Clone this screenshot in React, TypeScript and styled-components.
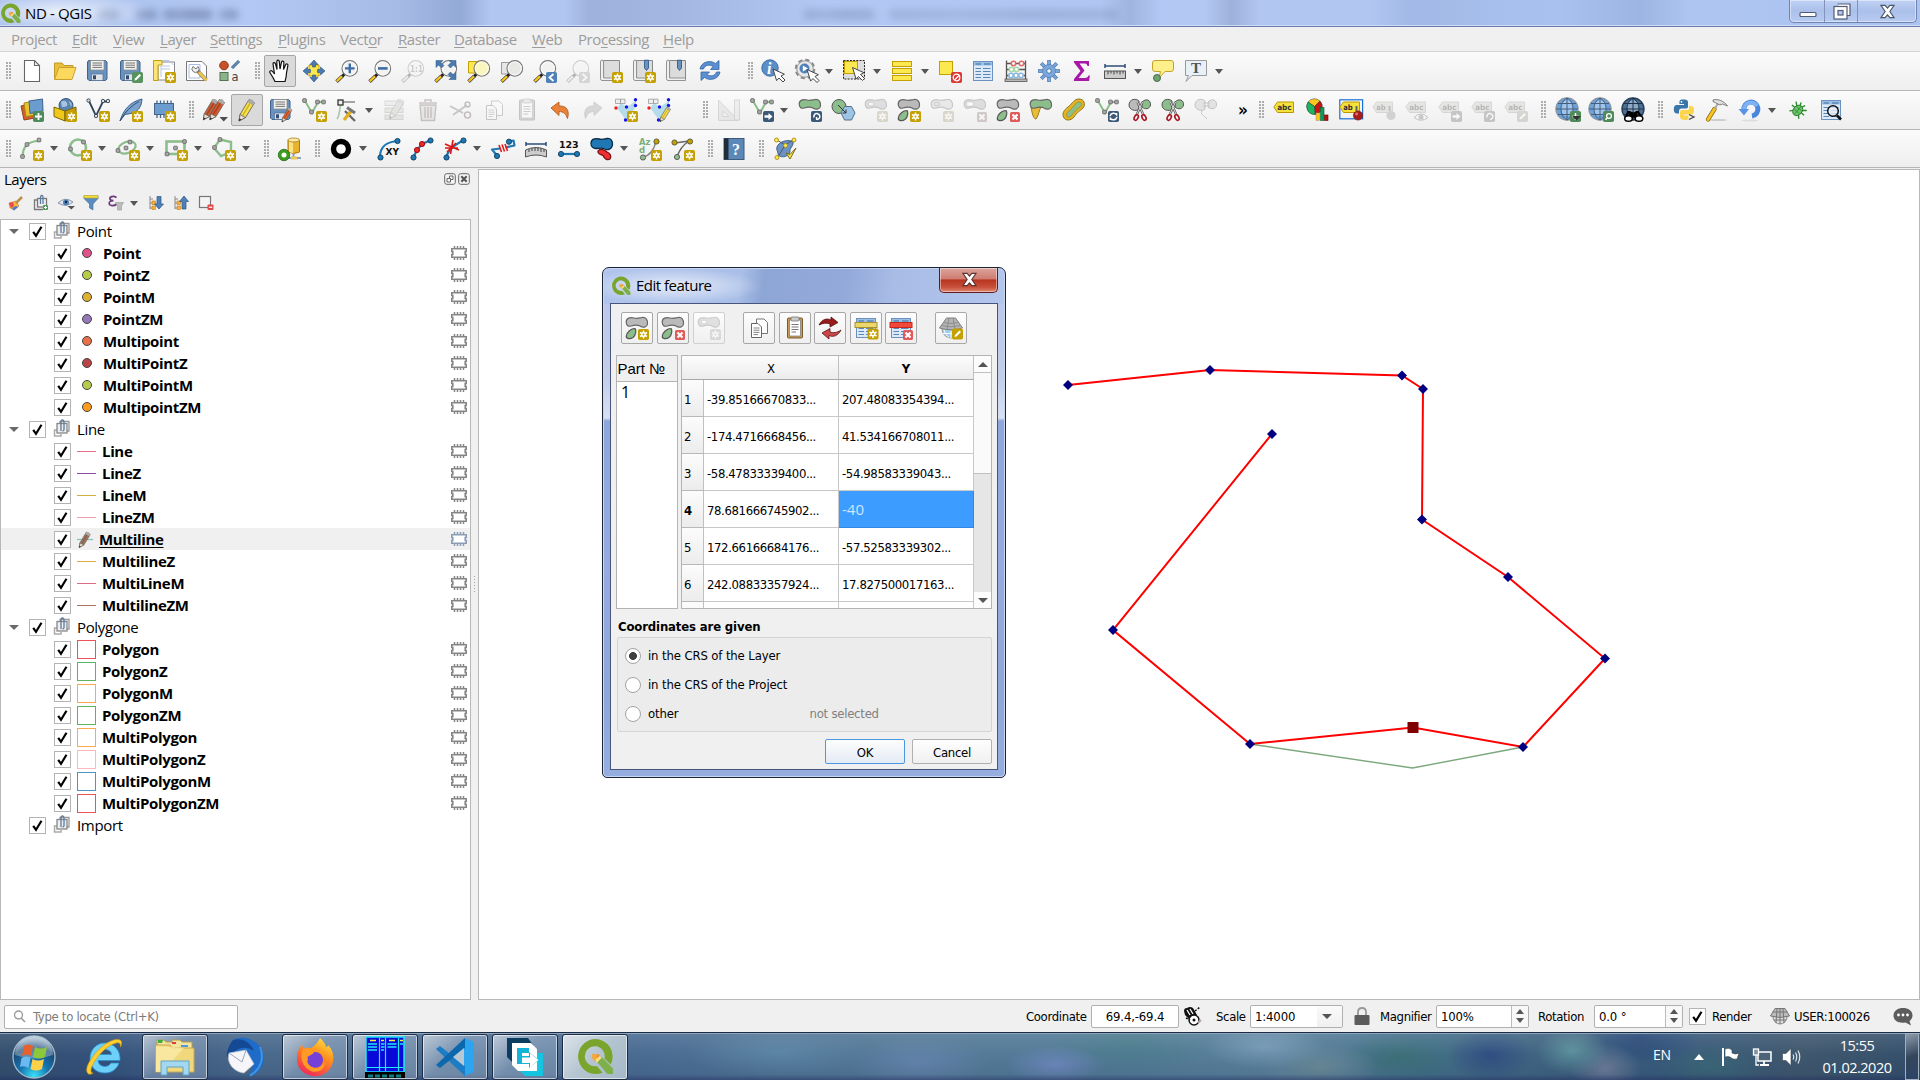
import React from 'react';
import styled, { createGlobalStyle, css } from 'styled-components';

const ui = '"Open Sans", "Noto Sans", sans-serif';
const tahoma = '"DejaVu Sans Condensed", "DejaVu Sans", sans-serif';

const Global = createGlobalStyle`
  * { box-sizing: border-box; }
  html, body { margin: 0; padding: 0; overflow: hidden; }
  body { width: 1920px; height: 1080px; background: #f0f0f0; color: #000; }
`;

/* ------------------------------------------------------------------ */
/* Icon fragments                                                      */
/* ------------------------------------------------------------------ */

const Star = ({ x = 13, y = 13 }: { x?: number; y?: number }) => (
  <g transform={`translate(${x} ${y})`}>
    <rect width="11" height="11" rx="1.8" fill="#c4a000" />
    <path d="M5.5 1.5V9.5M2 3.5L9 7.5M9 3.5L2 7.5" stroke="#fff" strokeWidth="1.5" />
    <circle cx="5.5" cy="5.5" r="2.5" fill="#fff" />
    <circle cx="5.5" cy="5.5" r="1" fill="#c4a000" />
  </g>
);
const Remove = () => (
  <g transform="translate(14 14)">
    <rect width="10" height="10" rx="1.6" fill="#e05a5a" />
    <path d="M2.5 2.5L7.5 7.5M7.5 2.5L2.5 7.5" stroke="#fff" strokeWidth="2.2" />
  </g>
);
const Badge = ({ fill, children, x = 13, y = 13 }: any) => (
  <g transform={`translate(${x} ${y})`}>
    <rect width="11" height="11" rx="1.8" fill={fill} />
    {children}
  </g>
);
const PencilMark = () => <path d="M2.5 8.5L3 6.5 7.5 2 9 3.5 4.5 8Z" fill="#fff" />;
const Disk = ({ x = 1, y = 1 }: any) => (
  <g transform={`translate(${x} ${y})`}>
    <path d="M1.5 0.5H18.5L20 2V19L18.5 20.5H2L0.5 19V2Z" fill="#6b92bd" stroke="#41638c" />
    <rect x="3.5" y="0.5" width="13.5" height="9.5" fill="#f0f0ee" stroke="#888a85" strokeWidth=".7" />
    <path d="M5.5 3H15M5.5 5.2H15M5.5 7.4H15" stroke="#555" strokeWidth=".8" />
    <rect x="4.5" y="14" width="11.5" height="6.5" fill="#dfe3e8" stroke="#41638c" strokeWidth=".6" />
    <rect x="6" y="15.3" width="3" height="4" fill="#2f4d78" />
  </g>
);
const Lens = ({ fill = '#f2f2f0', handle = '#fcc51a', children }: any) => (
  <g>
    <path d="M9.5 15L6.5 18" stroke="#222" strokeWidth="3" />
    <path d="M7.5 17L1.5 22.6" stroke="#444" strokeWidth="3.6" />
    <path d="M7 17.4L1.8 22.2" stroke={handle} strokeWidth="2.2" />
    <circle cx="14.8" cy="9.4" r="7.8" fill={fill} stroke="#777" strokeWidth="1.1" />
    <circle cx="14.8" cy="9.4" r="6.5" fill="none" stroke="#fff" strokeWidth=".8" />
    {children}
  </g>
);
const blobD = 'M1.2 6C1.2 2 5 1 9 2 12 2.8 14 2 17 1.5 21 1 23 4 22.5 8 22 11.5 18 12 15 10 12 8.2 9 9 6 10 3 11 1.2 9 1.2 6Z';
const Blob = ({ fill = '#8cbe8c' }: any) => <path d={blobD} fill={fill} stroke="#666" strokeWidth="1.2" />;
const Leaf = ({ fill = '#8cbe8c' }: any) => (
  <path d="M1.3 20C2 16 6 12.5 10 12.5 11.5 14 11 19 8 21.5 5 23.5 1 23 1.3 20Z" fill={fill} stroke="#555" strokeWidth="1.2" />
);
const Nodes = ({ pts, fill = '#aaa', r = 1.8 }: { pts: number[][]; fill?: string; r?: number }) => (
  <>
    {pts.map(([x, y]) => (
      <rect key={`${x}-${y}`} x={x - r} y={y - r} width={r * 2} height={r * 2} rx=".6" fill={fill} stroke="#666" strokeWidth=".9" />
    ))}
  </>
);
const Dots = ({ pts, fill, r = 2.6, stroke = '#0b3c5d' }: any) => (
  <>
    {pts.map(([x, y]: number[]) => (
      <circle key={`${x}-${y}`} cx={x} cy={y} r={r} fill={fill} stroke={stroke} strokeWidth=".9" />
    ))}
  </>
);
const Vee = ({ c = '#8cbe8c' }: any) => (
  <>
    <path d="M3 3L10 15 16 4H22" fill="none" stroke={c} strokeWidth="2" />
    <Nodes pts={[[2.5, 2.5], [9.5, 14], [15.5, 4], [21.5, 4]]} />
  </>
);
const Cursor = ({ x = 11, y = 9 }: any) => (
  <path transform={`translate(${x} ${y})`} d="M1 1L4.6 12.6 7 10 11 14 13 12 9 8 12.4 6.2Z" fill="#fff" stroke="#444" strokeWidth="1" />
);
const Pencil = ({ c = '#e6562b', d = '#a8381a', x = 0, y = 0, s = 1 }: any) => (
  <g transform={`translate(${x} ${y}) scale(${s})`}>
    <path d="M3 23L4 16.5 13 1.5 18.5 4.8 9.5 19.5Z" fill={c} stroke="#555" strokeWidth=".8" />
    <path d="M6.5 17.7L15.5 3" stroke={d} strokeWidth="1.2" />
    <path d="M3 23L4 16.5 9.5 19.5Z" fill="#e8ddc8" stroke="#555" strokeWidth=".7" />
    <path d="M3 23L3.4 20.5 5.4 21.5Z" fill="#222" />
    <path d="M11.5 4L13 1.5Q16.5 0 18.5 4.8L17 7.2Z" fill="#aaa" />
  </g>
);
const Paper = () => <path d="M4.5 1.5H14.5L19.5 6.5V22.5H4.5Z M14.5 1.5V6.5H19.5" fill="#fff" stroke="#666" strokeWidth="1.1" />;
const Bookmark = () => (
  <>
    <path d="M4.5 1.5H20.5V20.5H4.5Z" fill="#dcdcdc" stroke="#888" />
    <path d="M1.5 3Q1.5 1 3 1T4.6 3V19H20.5V21.5H3Q1.5 21.5 1.5 19.5Z" fill="#f0f0f0" stroke="#888" strokeWidth=".9" />
  </>
);
const Ribbon = () => <path d="M12.5 1.2H16.5V9L14.5 11.5 12.5 9Z" fill="#6b92bd" stroke="#2f5a8c" strokeWidth=".9" />;
const TableGlyph = ({ x = 2, y = 2 }: any) => (
  <g transform={`translate(${x} ${y})`}>
    <rect x=".5" y=".5" width="19" height="19" fill="#dceaf8" stroke="#6b92bd" />
    <rect x="1" y="1" width="18" height="3.5" fill="#9cc0e4" />
    <path d="M2.5 3H8M11 3H17.5" stroke="#5a86b8" strokeWidth="1.4" />
    <path d="M2.5 7.5H8M10 7.5H17.5M2.5 10.5H8M10 10.5H17.5M2.5 13.5H8M10 13.5H17.5M2.5 16.5H8M10 16.5H17.5" stroke="#5a86b8" strokeWidth="1" />
  </g>
);
const Globe = ({ dark }: any) => (
  <>
    <circle cx="12" cy="11" r="11" fill={dark ? '#4d7196' : '#6ba2dc'} stroke={dark ? '#2a4058' : '#8a98a8'} strokeWidth="1.4" />
    <ellipse cx="12" cy="10" rx="6" ry="8" fill={dark ? '#a8c2dc' : '#b8d6f4'} opacity=".7" />
    <path d="M12 0V22M1 11H23M3 5.5H21M3 16.5H21M12 0C4 4 4 18 12 22M12 0C20 4 20 18 12 22" fill="none" stroke={dark ? '#1d3248' : '#475d78'} strokeWidth="1" />
  </>
);
const Tag = ({ fill = '#f6e03a', text = 'abc', y = 4, stroke = '#b89a00' }: any) => (
  <>
    <path d={`M0.8 ${y + 5}L4.5 ${y}H20.5V${y + 10.5}H4.5Z`} fill={fill} stroke={stroke} strokeWidth="1" />
    <text x="4.2" y={y + 7.9} fontFamily="DejaVu Sans" fontWeight="bold" fontSize="7.6" fill="#333" textLength={text === 'abc' ? 14.5 : 9.5} lengthAdjust="spacingAndGlyphs">{text}</text>
  </>
);
const Scissors = () => (
  <>
    <path d="M9.5 4L15 16M14.5 4L9 16" stroke="#555" strokeWidth="2.4" />
    <path d="M9.5 4L15 16M14.5 4L9 16" stroke="#ddd" strokeWidth="1" />
    <ellipse cx="8.2" cy="19.5" rx="1.8" ry="3" transform="rotate(28 8.2 19.5)" fill="none" stroke="#a81420" strokeWidth="1.6" />
    <ellipse cx="16" cy="19.5" rx="1.8" ry="3" transform="rotate(-28 16 19.5)" fill="none" stroke="#a81420" strokeWidth="1.6" />
  </>
);
const Halves = ({ a, b }: any) => (
  <>
    <path d="M11 3V11C8 14 1 12 1 7 1 1 8 0 11 3Z" fill={a} stroke="#555" />
    <path d="M14 4C18 0 23 2 22.5 7 22 11 17 12 14 9Z" fill={b} stroke="#555" />
  </>
);
const Page = () => (
  <>
    <path d="M9.5 3H17L20.5 6.5V17.5H9.5Z" fill="#fff" stroke="#777" />
    <path d="M4.5 7.5H11L14.5 11V21.5H4.5Z" fill="#fff" stroke="#666" />
    <path d="M6.5 12H12.5M6.5 14.2H12.5M6.5 16.4H12.5M6.5 18.6H11" stroke="#777" strokeWidth=".9" />
  </>
);
const Clipboard = ({ c = '#c89c58' }: any) => (
  <>
    <rect x="4.5" y="2" width="15" height="20" rx="1" fill={c} stroke="#7a5c2a" />
    <rect x="6.5" y="4" width="11" height="16" fill="#fff" stroke="#777" strokeWidth=".7" />
    <rect x="8" y="1" width="8" height="4" rx="1" fill="#ccc" stroke="#777" strokeWidth=".8" />
    <path d="M8.5 8.5H15.5M8.5 11H15.5M8.5 13.5H15.5M8.5 16H13" stroke="#777" />
  </>
);
const VertexPoly = () => (
  <>
    <path d="M3 10L7 5 13 9 22 3V8L18 15 12 22Z" fill="#b4dcea" />
    <path d="M1.5 1.2H6.5V5.5H1.5ZM6.5 1.2H11V5.5H6.5Z" fill="#eee" stroke="#999" strokeWidth=".8" />
    <circle cx="2" cy="10" r="1.7" fill="#f02020" />
    {[[12.5, 9], [21.5, 1.8], [21.5, 7.5], [11.5, 22]].map(([x, y]) => <circle key={x + '' + y} cx={x} cy={y} r="1.7" fill="#1414e6" />)}
  </>
);

const QLogo = ({ size = 24 }: { size?: number }) => (
  <svg width={size} height={size} viewBox="0 0 40 40">
    <path fillRule="evenodd" d="M20 1A18.500 18.500 0 1 0 28 36.500L22 29.500A10.500 10.500 0 1 1 30 21.500L36.500 28A18.500 18.500 0 0 0 20 1Z" fill="#7aa52c" />
    <path d="M17 17L24 17 26.500 22 20 25Z" fill="#f08a2c" />
    <path d="M17 17H23L21 23 17 22Z" fill="#f5a83c" />
    <path d="M22 25L27 20 39 32V38H33Z" fill="#7eb04a" />
    <path d="M20 23L25 19 27 21 22 26Z" fill="#f6e27a" />
  </svg>
);

const icons: Record<string, React.ReactNode> = {
  file: <Paper />,
  folder: <><path d="M1.500 20V4H9L11 6.500H20V9" fill="#eabf3a" stroke="#c09a2a" /><path d="M1.500 20.500L6 8.500H23L19 20.500Z" fill="#fcd95c" stroke="#c9a22e" /></>,
  save: <Disk />,
  saveAs: <><Disk /><Badge fill="#5a9160"><PencilMark /></Badge></>,
  newLayout: <><path d="M6 3H22.500V21H6Z" fill="#fff" stroke="#888" /><path d="M1.500 1.500H10V6H6V21.500H1.500Z" fill="#fce37a" stroke="#c4a000" /><path d="M10 1.500H17L21.500 6M9 7H18M9 10H18M9 7V18" stroke="#b8c8e8" fill="none" /><Star /></>,
  layoutMgr: <><path d="M1.500 2.500H17L21.500 7V21.500H1.500Z" fill="#fff" stroke="#777" /><path d="M4 5.500H15V19H4Z" fill="none" stroke="#a9bbe8" /><path d="M11.500 10.500L21 21" stroke="#777" strokeWidth="4" /><path d="M14 13L21.500 21.500" stroke="#e8c44a" strokeWidth="3" /><path d="M8 7.500A3.500 3.500 0 1 0 13 7.500L11 10Z" fill="#eee" stroke="#777" /></>,
  style: <><circle cx="6" cy="6.500" r="4.300" fill="#c8512a" stroke="#8c3418" /><path d="M14 9L21 2" stroke="#41638c" strokeWidth="3" /><path d="M14 9L21 2" stroke="#6b92bd" strokeWidth="1.500" /><rect x="2" y="13.500" width="8" height="8" fill="#8cb48c" stroke="#527252" /><text x="13.500" y="21.800" fontFamily="DejaVu Sans" fontSize="11.500" fill="#444">a</text></>,
  hand: <path d="M7 22.500C5 18 3 15.500 1.700 13.300 1.500 11.500 3.500 11 5 13L6.500 15 5 5C5 3.400 7 3.200 7.500 4.800L9 10.500 8.800 2.500C9 .8 11 .8 11.300 2.400L12 10 13.500 3C14 1.500 16 1.800 15.900 3.500L15.500 10.600 17.700 5.500C18.500 4.200 20.300 5 19.900 6.500L18.500 14C18.500 17 17.700 20 17 22.500Z" fill="#fff" stroke="#111" strokeWidth="1.200" />,
  panSel: <><path d="M7 6H17V17H7Z" fill="#fce94f" stroke="#c4a000" /><g fill="#4a7ab0" stroke="#2d5580" strokeWidth=".6"><path d="M12 1L16 5.500H13.500V8H10.500V5.500H8Z" /><path d="M12 23L16 18.500H13.500V16H10.500V18.500H8Z" /><path d="M1 12L5.500 8V10.500H8.500V13.500H5.500V16Z" /><path d="M23 12L18.500 8V10.500H15.500V13.500H18.500V16Z" /></g></>,
  zoomIn: <Lens><path d="M14.800 4.500V14.300M10 9.400H19.600" stroke="#3d6da5" strokeWidth="2.400" /></Lens>,
  zoomOut: <Lens><path d="M10 9.400H19.600" stroke="#3d6da5" strokeWidth="2.600" /></Lens>,
  zoomOne: <Lens handle="#ddd"><text x="9" y="12.500" fontFamily="DejaVu Sans Condensed" fontWeight="bold" fontSize="8" fill="#777">1:1</text></Lens>,
  zoomFull: <><Lens /><g fill="#4a7ab0" stroke="#2d5580" strokeWidth=".5"><path d="M2 1.500H9L7 3.500 10 6.500 7.500 9 4.500 6 2 8.500Z" /><path d="M22 1.500H15L17 3.500 14 6.500 16.500 9 19.500 6 22 8.500Z" /><path d="M22 20.500H15L17 18.500 14 15.500 16.500 13 19.500 16 22 13.500Z" /></g></>,
  zoomSel: <><path d="M1.500 2.500H12V14H1.500Z" fill="#fce94f" stroke="#c4a000" /><Lens fill="#faf6c0" /></>,
  zoomLayer: <><path d="M1.500 3.500H12V15H1.500Z" fill="#e6e6e6" stroke="#999" /><Lens fill="#e8e8e4" /></>,
  zoomLast: <><Lens /><Badge fill="#4f81b8"><path d="M7.500 2L3.500 5.500 7.500 9" stroke="#fff" strokeWidth="1.800" fill="none" /></Badge></>,
  zoomNext: <><Lens handle="#ddd" /><Badge fill="#999"><path d="M3.500 2L7.500 5.500 3.500 9" stroke="#fff" strokeWidth="1.800" fill="none" /></Badge></>,
  newMap: <><Bookmark /><Star /></>,
  newBook: <><Bookmark /><Ribbon /><Star /></>,
  books: <><Bookmark /><Ribbon /></>,
  refresh: <g fill="#5b8fd0" stroke="#3668a8" strokeWidth=".8"><path d="M2 10C3 3 12 .5 17.500 4.500L21 1.500V10.500H12.500L15 7.500C11.500 5 7 6 5.500 10Z" /><path d="M22 13C21 20 12 22.500 6.500 18.500L3 21.500V13H11.500L9 15.500C12.500 18 17 17 18.500 13Z" /></g>,
  info: <><circle cx="9" cy="9" r="8.200" fill="#5b8fc8" stroke="#3d6da5" /><text x="6" y="14.500" fontFamily="Liberation Serif" fontStyle="italic" fontWeight="bold" fontSize="16" fill="#fff">i</text><Cursor /></>,
  action: <><circle cx="11" cy="10" r="9.300" fill="#e8e8e8" stroke="#888" strokeWidth="2" strokeDasharray="4.300 3" /><circle cx="11" cy="10" r="8.200" fill="#e8e8e8" stroke="#888" strokeWidth=".8" /><circle cx="10.500" cy="9.500" r="5" fill="#4f81b8" /><path d="M8.800 6.500L14 9.500 8.800 12.500Z" fill="#fff" /><Cursor x={12} y={9.500} /></>,
  select: <><rect x="1.500" y="1.500" width="21" height="18.500" fill="#ddd" stroke="#222" strokeDasharray="2 1.200" /><rect x="2.500" y="2.500" width="13" height="12" fill="#fce94f" stroke="#c4a000" /><Cursor x={9.500} y={7.500} /></>,
  selForm: <g fill="#fce94f" stroke="#c4a000"><rect x="2.500" y="2.500" width="19" height="5" /><rect x="2.500" y="9.500" width="19" height="5" /><rect x="2.500" y="16.500" width="19" height="5" /></g>,
  deselect: <><rect x="1.500" y="2.500" width="13" height="13" fill="#fce94f" stroke="#c4a000" /><Badge fill="#dc3838"><circle cx="5.500" cy="5.500" r="3.300" fill="none" stroke="#fff" strokeWidth="1.300" /><path d="M3.500 8L8 3.500" stroke="#fff" strokeWidth="1.300" /></Badge></>,
  table: <TableGlyph />,
  abacus: <><path d="M2.500 1.500V20M21.500 1.500V20M1 21.500H23M2.500 4.500H21.500M2.500 10.500H21.500M2.500 16.500H21.500" stroke="#555" strokeWidth="1.300" /><rect x="1" y="20" width="22" height="2.500" fill="#bbb" stroke="#555" strokeWidth=".8" />{[[9.500, 4.500, '#e26a6a'], [17.500, 4.500, '#e26a6a'], [7.500, 10.500, '#a8d8a8'], [12.500, 10.500, '#a8d8a8'], [7, 16.500, '#8cb8dc'], [12, 16.500, '#8cb8dc'], [17, 16.500, '#8cb8dc']].map((a: any, i) => <circle key={i} cx={a[0]} cy={a[1]} r="2.200" fill="#fff" stroke={a[2]} strokeWidth="1.600" />)}</>,
  gear: <><g stroke="#4a7ab0" strokeWidth="3.600">{[0, 45, 90, 135].map(a => <path key={a} d="M12 1V23" transform={`rotate(${a} 12 12)`} />)}</g><g stroke="#7ba7dc" strokeWidth="2.200">{[0, 45, 90, 135].map(a => <path key={a} d="M12 1.500V22.500" transform={`rotate(${a} 12 12)`} />)}</g><circle cx="12" cy="12" r="6.500" fill="#7ba7dc" stroke="#5583bd" strokeWidth=".8" /><circle cx="12" cy="12" r="2.300" fill="#f4f4f4" stroke="#4a7ab0" /></>,
  sigma: <path d="M4 2H19V7H17.500C17 5 16 4.500 14 4.500H9.500L14.500 11.500 8.500 19H15C17 19 18 18 18.500 16.500H20L19 22H4V20L10.500 12 4 3.500Z" fill="#a818a8" />,
  measure: <><path d="M2 7H22M2 5V9M22 5V9" stroke="#2f4d78" strokeWidth="1.500" /><rect x="1.500" y="12" width="21" height="7.500" fill="#ccc" stroke="#555" /><path d="M5 12V15.500M8 12V14.500M11 12V15.500M14 12V14.500M17 12V15.500M20 12V14.500" stroke="#444" /></>,
  tip: <><path d="M4 1.500H20Q22.500 1.500 22.500 4V10Q22.500 12.500 20 12.500H14L8 19 9.500 12.500H4Q1.500 12.500 1.500 10V4Q1.500 1.500 4 1.500Z" fill="#fdf08a" stroke="#c4a32a" /><circle cx="6" cy="19" r="3.500" fill="#6fa36f" stroke="#4a6a4a" /></>,
  textNote: <><path d="M1.500 1.500H22.500V16.500H8L2 22.500 4.500 16.500H1.500Z" fill="#e8f0f8" stroke="#999" /><text x="7" y="14.300" fontFamily="Liberation Serif" fontWeight="bold" fontSize="15" fill="#555">T</text></>,

  dataSource: <><path d="M1 8L12 5 15 20 4 22Z" fill="#d0602c" stroke="#96421c" /><path d="M4 5L14 3 16 17 6 18.500Z" fill="#e8c42c" stroke="#a88c10" /><path d="M9 3L22.500 1 23 13 10 15.500Z" fill="#6b9cd0" stroke="#41638c" /><Badge fill="#4f8a5a"><path d="M5.500 2V9M2 5.500H9" stroke="#fff" strokeWidth="1.800" /></Badge></>,
  geopackage: <><circle cx="13" cy="7.500" r="7" fill="#5a84b0" stroke="#37587c" /><path d="M8 4Q12 1 14 5T9 9ZM16 3Q20 5 18 9" fill="#a9c4e0" /><path d="M1 9L12 13V23L1 18.500Z" fill="#f0c81c" stroke="#7a6408" /><path d="M12 13L23 9V18L12 23Z" fill="#c89c08" stroke="#7a6408" /><Star /></>,
  newShape: <><path d="M3 3L10 18 17 3.500H22" fill="none" stroke="#2f4356" strokeWidth="1.800" /><Dots pts={[[2.500, 2.500], [17, 3], [22, 3], [10, 18]]} fill="#ddd" r={1.700} stroke="#2f4356" /><Star /></>,
  feather: <><path d="M1 23C4 13 10 4 23 1 22.500 7 21 11 16 14 12 16 8 16 6 16.500Z" fill="#7ba2cc" stroke="#41638c" /><path d="M1 23C6 14 12 8 20 3.500" fill="none" stroke="#2f4d78" /><Star /></>,
  chipNew: <><path d="M5 2.500V20M8.500 2.500V20M12 2.500V20M15.500 2.500V18M19 2.500V18" stroke="#41638c" strokeWidth="1.300" /><rect x="2.500" y="5.500" width="19" height="11" fill="#6b9cd0" stroke="#41638c" /><Star /></>,
  pencils: <><Pencil c="#c4603a" x={-2.500} s={.95} /><Pencil c="#d05a30" x={4} s={.95} /><path d="M16.500 19H25L20.700 23.500Z" fill="#4d4d4d" /></>,
  pencil: <Pencil c="#f4e04a" d="#c9a820" x={1} />,
  saveEdit: <><Disk /><Pencil c="#e0622c" x={11} y={9} s={.65} /></>,
  addLine: <><Vee /><Star x={14} /></>,
  vertex: <><path d="M4 4H20" stroke="#777" strokeWidth="1.300" /><path d="M6 6C4 12 5 17 2 21" stroke="#a8c8a8" strokeWidth="1.600" fill="none" /><path d="M10 13L20 23" stroke="#666" strokeWidth="2.200" /><path d="M17 12L9 22" stroke="#e0b020" strokeWidth="3.400" /><path d="M12 9.500L20 15" stroke="#777" strokeWidth="3" /><rect x="3" y="2" width="5" height="5" fill="#eee" stroke="#333" strokeWidth="1.300" /></>,
  multiEdit: <><rect x="2" y="3" width="18" height="4.500" fill="#ddd" stroke="#999" /><rect x="2" y="10" width="18" height="4.500" fill="#c8c8a0" stroke="#999" /><rect x="2" y="17" width="18" height="4.500" fill="#c8c8a0" stroke="#999" /><Pencil c="#d8c8b0" d="#aaa" x={4} s={.9} /></>,
  trash: <><path d="M4 7H20L18.500 22.500H5.500Z" fill="#d8c4c4" stroke="#8c5454" strokeWidth="1.400" /><path d="M3 5H21M9 4V2H15V4M9 9V20M12 9V20M15 9V20" stroke="#8c5454" strokeWidth="1.500" fill="none" /></>,
  cut: <><path d="M1 8L14 15M4 17L18 7" stroke="#666" strokeWidth="1.800" /><circle cx="18.500" cy="6.500" r="2.500" fill="none" stroke="#844" strokeWidth="1.500" /><circle cx="18.500" cy="17" r="3" fill="none" stroke="#844" strokeWidth="1.500" /></>,
  copy: <Page />,
  paste: <Clipboard />,
  pasteGray: <Clipboard c="#999" />,
  undo: <path d="M3 10L11 4V8C18 7.500 22 12 19.500 20.500 18 16 15.500 13.500 11 13.500V17.500Z" fill="#e8813a" stroke="#b85c1c" strokeWidth=".9" />,
  redo: <path d="M21 10L13 4V8C6 7.500 2 12 4.500 20.500 6 16 8.500 13.500 13 13.500V17.500Z" fill="#999" stroke="#777" strokeWidth=".9" />,
  vertexNew: <><VertexPoly /><Star /></>,
  vertexEdit: <><VertexPoly /><Pencil c="#f4d84a" d="#c9a820" x={11} y={8} s={.68} /></>,
  setSquare: <><path d="M1.500 2V22.500H21.500Z" fill="#dccaca" stroke="#999" /><path d="M6 13V18.500H12Z" fill="#f4f4f4" stroke="#999" /><rect x="17.500" y="2" width="5" height="20" fill="#ddd" stroke="#999" /></>,
  moveFeat: <><Vee /><Badge fill="#3b5a78"><path d="M1.500 4.300H5.500V2L9.500 5.500 5.500 9V6.700H1.500Z" fill="#fff" /></Badge></>,
  rotate: <><Blob /><Badge fill="#3b5a78"><path d="M3 6.500A3 3 0 1 1 6 8.500M5.500 6L5.700 9" stroke="#fff" strokeWidth="1.500" fill="none" /></Badge></>,
  simplify: <><circle cx="8" cy="8.500" r="7" fill="#8cbe8c" stroke="#555" /><path d="M10 15L13.500 8.500H20.500L24 15 20.500 22H13.500Z" fill="#9cc4e4" stroke="#55708c" /><path d="M7 7L15 15M15 15V11.500M15 15H11.500" stroke="#333" fill="none" /></>,
  addRing: <><Blob fill="#aaa" /><ellipse cx="7" cy="6" rx="3" ry="2" fill="#fff" stroke="#777" /><Star /></>,
  addPart: <><Blob fill="#bababa" /><Leaf /><Star /></>,
  fillRing: <><Blob fill="#ccc" /><ellipse cx="7" cy="6" rx="3" ry="2" fill="#bbb" stroke="#777" /><Star /></>,
  delRing: <><Blob fill="#aaa" /><ellipse cx="7" cy="6" rx="4" ry="2.500" fill="#fff" stroke="#777" /><Remove /></>,
  delPart: <><Blob fill="#bababa" /><Leaf /><Remove /></>,
  reshape: <><path d="M2 9H12C10 12 10 17 7 21 4 21 3 14 2 9Z" fill="#e8bc3a" stroke="#9a7c1c" /><Blob /></>,
  offset: <><path d="M17 1C22 1 24 6 21 10 18 13 15 14 12 19 9 23 3 23 1.500 19 0 15 2 12 6 9 11 5 12 1 17 1Z" fill="#e4b422" stroke="#8c7420" /><path d="M17 4C20 4 20.500 7 18 9 14 12 12 14 10 17 8 20 5 19.500 4.500 17.500 4 15 7 13 10 10 13 7 14 4 17 4Z" fill="#8cbe8c" stroke="#a88c20" strokeWidth=".8" /></>,
  reverse: <><Vee /><Badge fill="#3b5a78"><path d="M2 5C3 1.500 7 1.500 8.500 3.500V2M9 6C8 9.500 4 9.500 2.500 7.500V9" stroke="#fff" strokeWidth="1.500" fill="none" /></Badge></>,
  splitFeat: <><Halves a="#bbb" b="#8cbe8c" /><Scissors /></>,
  splitPart: <><Halves a="#8cbe8c" b="#8cbe8c" /><Scissors /></>,
  merge: <><Halves a="#bbb" b="#bbb" /><path d="M9 5H16M9 8H16M8 13C6 17 10 17 13 21" stroke="#666" fill="none" /></>,
  label: <Tag />,
  diagram: <><path d="M8.500 8.500L2 4A8 8 0 0 1 14 3Z" fill="#f8c81c" stroke="#555" strokeWidth=".6" /><path d="M8.500 8.500L14 3A8 8 0 0 1 9 16.500Z" fill="#c81414" stroke="#333" strokeWidth=".6" /><path d="M8.500 8.500L9 16.500A8 8 0 0 1 2 4Z" fill="#1cb45c" stroke="#333" strokeWidth=".6" /><rect x="10" y="15" width="3.500" height="7.500" fill="#f8c81c" stroke="#a88" strokeWidth=".5" /><rect x="14.500" y="9.500" width="3.500" height="13" fill="#0c9c54" stroke="#063" strokeWidth=".6" /><rect x="18.500" y="17" width="3.500" height="5.500" fill="#b41414" stroke="#600" strokeWidth=".6" /></>,
  pinLabels: <><rect x=".8" y="1.800" width="22.800" height="19" fill="none" stroke="#1a6fd8" strokeWidth="1.200" /><Tag text="ab" /><path d="M17.500 8V13" stroke="#666" strokeWidth="2" /><circle cx="19" cy="17.500" r="4.600" fill="#a81c1c" stroke="#701010" strokeWidth=".6" /><circle cx="17.600" cy="16" r="1.400" fill="#e07a7a" /></>,
  pinGray: <><Tag text="ab" fill="#c8c4a8" stroke="#998" /><circle cx="19" cy="17.500" r="4.600" fill="#a88" /><path d="M17.500 8V13" stroke="#555" strokeWidth="2" /></>,
  showGray: <><Tag fill="#c8c4a8" stroke="#998" /><path d="M9 19.500Q16 12.500 23 19.500 16 25 9 19.500Z" fill="#fff" stroke="#555" /><circle cx="16" cy="19.300" r="2.500" fill="#678" /></>,
  moveGray: <><Tag fill="#c8c4a8" stroke="#998" /><Badge fill="#667"><path d="M1.500 4.300H5.500V2L9.500 5.500 5.500 9V6.700H1.500Z" fill="#fff" /></Badge></>,
  rotGray: <><Tag fill="#c8c4a8" stroke="#998" /><Badge fill="#667"><path d="M3 6.500A3 3 0 1 1 6 8.500" stroke="#fff" strokeWidth="1.500" fill="none" /></Badge></>,
  editGray: <><Tag fill="#c8c4a8" stroke="#998" /><Badge fill="#997"><PencilMark /></Badge></>,
  web1: <><Globe /><Badge fill="#4f8a5a" x={15}><path d="M5.500 2V9M2 5.500H9" stroke="#fff" strokeWidth="1.500" /></Badge><path d="M17 18H26L21.500 22.500Z" fill="#333" /></>,
  web2: <><Globe /><Badge fill="#4f8a5a" x={15}><circle cx="6" cy="5" r="2.400" fill="none" stroke="#fff" strokeWidth="1.300" /><path d="M4 7L2.500 8.800" stroke="#fff" strokeWidth="1.500" /></Badge></>,
  web3: <><Globe dark /><path d="M9 14.500L7 13.500 5 18M15 14.500L17 13.500 20 18M9 14L8.500 19H15.500L15 14L12.500 15.500Z" fill="#000" stroke="#000" strokeWidth="1.600" /><ellipse cx="7.500" cy="20.500" rx="3.800" ry="2.800" fill="#fff" stroke="#000" strokeWidth="1.500" /><ellipse cx="18" cy="20.500" rx="3.800" ry="2.800" fill="#fff" stroke="#000" strokeWidth="1.500" /></>,
  python: <><path d="M11 1.500C7 1.500 7.500 3.500 7.500 6H12V7H5C2.500 7 1.800 9 1.800 11.500S3 15.500 5 15.500H7V13C7 11.500 8 10.500 9.500 10.500H14C15.500 10.500 16 9.500 16 8.500V4C16 2 14 1.500 11 1.500Z" fill="#3a76a8" /><circle cx="9.500" cy="3.800" r=".9" fill="#fff" /><path d="M13 22C17 22 16.500 20 16.500 17.500H12V16.500H19C21.500 16.500 22 14.500 22 12S21 8 19 8H17V10.500C17 12 16 12 14.500 12H10C8.500 12 8 13 8 14.500V19C8 21 10 22 13 22Z" fill="#fdd54a" /><path d="M17 16.500L22 19 17 21.500" fill="none" stroke="#444" strokeWidth="1.300" /></>,
  hammer: <><ellipse cx="13" cy="22" rx="9" ry="1" fill="#ccc" /><path d="M3 21.500L9.500 11" stroke="#8c6a08" strokeWidth="4.300" strokeLinecap="round" /><path d="M3 21.500L9.500 11" stroke="#f8c428" strokeWidth="2.800" strokeLinecap="round" /><path d="M10 10.500L13.500 4.500" stroke="#aaa" strokeWidth="2" /><path d="M8 2C13 .5 19 3 22.500 8L17.500 6 15 7 8 3.500Z" fill="#e0e0e0" stroke="#666" strokeWidth=".8" /></>,
  reload: <><ellipse cx="12" cy="22.500" rx="8" ry="1" fill="#ddd" /><path d="M6 12A7 7 0 1 1 14 18" fill="none" stroke="#4a86dc" strokeWidth="5" /><path d="M6 12A7 7 0 0 1 19 8" fill="none" stroke="#7fb2f4" strokeWidth="4" /><path d="M.5 11H11L6 17.500Z" fill="#5a92e8" /></>,
  bug: <g transform="rotate(40 12 12) translate(1.500 1.500) scale(.88)"><path d="M4 6L9 10M20 6L15 10M3 12H21M5 19L9 15M19 19L15 15M9 3L11 7M15 3L13 7" stroke="#2f8c2f" strokeWidth="1.600" /><ellipse cx="12" cy="12.500" rx="5" ry="6.500" fill="#6cc46c" stroke="#2a742a" /><path d="M12 6V19M8 10H16M8 14H16" stroke="#2f8c2f" strokeWidth=".9" /></g>,
  inspect: <><TableGlyph x={2} y={2} /><circle cx="14" cy="13" r="5.300" fill="#e8f0f8" fillOpacity=".8" stroke="#111" strokeWidth="1.500" /><path d="M18 17.500L22 21.500" stroke="#111" strokeWidth="2.600" /></>,

  curve: <><path d="M3 20C2 10 8 4 19 4" fill="none" stroke="#8cbe8c" strokeWidth="2.200" /><Nodes pts={[[2.500, 19.500], [7, 7.500], [19, 3]]} /><Star x={13} /></>,
  circleAdd: <><circle cx="10" cy="10.500" r="8" fill="none" stroke="#8cbe8c" strokeWidth="2.600" /><Nodes pts={[[2.500, 12], [15.500, 5]]} /><Star /></>,
  ellipseAdd: <><ellipse cx="11" cy="10.500" rx="9" ry="5.500" transform="rotate(-20 11 10.500)" fill="none" stroke="#8cbe8c" strokeWidth="2.200" /><Nodes pts={[[2, 13.500], [10, 11], [14, 5]]} /><Star /></>,
  rectAdd: <><rect x="2.500" y="4.500" width="18" height="12.500" fill="none" stroke="#8cbe8c" strokeWidth="2.600" /><Nodes pts={[[20.500, 4.500], [11.500, 11], [3, 17]]} /><Star /></>,
  polyAdd: <><path d="M8 2.500L19 5V15L9 19 2 11Z" fill="none" stroke="#8cbe8c" strokeWidth="2.400" /><Nodes pts={[[8, 2.500], [2.500, 10.500]]} /><Star /></>,
  db: <><path d="M10 3V15Q16 18 21.500 15V3" fill="#e8b42c" stroke="#a87c10" /><path d="M11 4V15Q13 16 15 16V4" fill="#fce08a" /><ellipse cx="15.700" cy="3" rx="5.800" ry="2" fill="#fce9a8" stroke="#a87c10" strokeWidth=".8" /><path d="M15.500 16.500V20M9 21H23" stroke="#8ca0b8" strokeWidth="2" /><path d="M13 19.500H19V22.500H13Z" fill="#e8c85a" /><circle cx="6" cy="18" r="4" fill="#fff" stroke="#3c9c1c" strokeWidth="3" /><circle cx="6" cy="18" r="5.700" fill="none" stroke="#1c5c0c" strokeWidth=".8" /></>,
  ring: <circle cx="12" cy="12" r="7.500" fill="#fff" stroke="#000" strokeWidth="5.400" />,
  xy: <><path d="M3 20C3 10 10 4.500 21 4" fill="none" stroke="#1f78b4" strokeWidth="2.200" /><Dots pts={[[3.500, 20.500], [20.500, 4]]} fill="#1f78b4" /><text x="8.500" y="17.500" fontFamily="DejaVu Sans" fontWeight="bold" fontSize="9" fill="#111">XY</text></>,
  pts: <><path d="M3 21L7 13 12 7 20 3.500" fill="none" stroke="#1f78b4" strokeWidth="2.200" /><Dots pts={[[3.500, 20.500], [20.500, 3.500]]} fill="#1f78b4" /><Dots pts={[[7, 13], [12, 7]]} fill="#f02828" stroke="#900" /></>,
  cross: <><path d="M3 21C5 12 12 8 20 3.500" fill="none" stroke="#1f78b4" strokeWidth="2.200" /><Dots pts={[[3.500, 20.500], [20.500, 3.500]]} fill="#1f78b4" /><path d="M2 7L16 13M10 3L7.500 17M4 15L13 6M2 11H15" stroke="#dc1414" strokeWidth="1.600" /></>,
  breakLine: <><path d="M6 18.500L1 12.500 9.500 11.500M14.500 10.500L23.500 8.500 22.500 3.500 18 4.500" fill="none" stroke="#1f78b4" strokeWidth="2.200" strokeLinejoin="round" /><Dots pts={[[6, 19], [18, 4.700]]} fill="#1f78b4" /><path d="M8 8L10.500 15M11 7.500L13.500 14.500M14 7L16.500 14" stroke="#e01c1c" strokeWidth="1.600" /></>,
  ruler: <><path d="M2 7H22M2 5V9M22 5V9" stroke="#2f4d78" strokeWidth="1.500" /><path d="M1.500 13Q12 8 22.500 13V20Q12 16 1.500 20Z" fill="#ccc" stroke="#555" /><path d="M5 12V15M8 11V14M11 10.500V14M14 10.500V14M17 11V15M20 12V15" stroke="#444" /></>,
  n123: <><text x="2" y="10.500" fontFamily="DejaVu Sans" fontWeight="bold" fontSize="9.500" fill="#111" textLength="19.500">123</text><path d="M4 17H20" stroke="#1f78b4" strokeWidth="2.200" /><Dots pts={[[4, 17], [20, 17]]} fill="#1f78b4" /></>,
  blobs: <><path d="M1 6.500C1 2 5 1 9 2 12 2.800 14 2 17 1.500 21 1 23 4 22.500 8 22 12 18 13.500 14.500 12 12 10.500 9 11.500 6 11.500 3 11.500 1 9.500 1 6.500Z" fill="#1f78b4" stroke="#0b2c45" strokeWidth="1.300" /><path d="M8 14C10 11 15 13 17 15 20 16 22 19 20 22 17 24 14 21 13 18.500 11 17.500 7 17 8 14Z" fill="#f03030" stroke="#701010" strokeWidth="1.200" /></>,
  azd: <><text x="1" y="8" fontFamily="DejaVu Sans" fontWeight="bold" fontSize="8.500" fill="#7ab07a">Az</text><text x="1" y="16" fontFamily="DejaVu Sans" fontWeight="bold" fontSize="8.500" fill="#7ab07a">d</text><path d="M5 20Q15 18 18 4" fill="none" stroke="#888" strokeWidth="1.300" /><Dots pts={[[18.500, 4.500]]} fill="#c4a000" stroke="#554" /><Dots pts={[[5, 20.500]]} fill="#8cbe8c" stroke="#555" /><Star /></>,
  axis: <><path d="M4 6L18 4Q9 10 6 20" fill="none" stroke="#666" strokeWidth="1.500" /><Dots pts={[[3.500, 5.500], [19, 4.500]]} fill="#c4a000" stroke="#554" /><Dots pts={[[6, 20]]} fill="#8cbe8c" stroke="#555" /><Star /></>,
  help: <><rect x="2" y="1.500" width="20" height="21" fill="#5c88b8" stroke="#3d5a78" /><rect x="2" y="1.500" width="4.500" height="21" fill="#1f2c3a" /><text x="10" y="17.500" fontFamily="Liberation Serif" fontWeight="bold" fontSize="16" fill="#fff">?</text></>,
  checkGeom: <><path d="M4 10C6 4 16 2 20 5 21 9 16 11 17 15 15 21 6 21 5 17 5 14 3 13 4 10Z" fill="#6b92c4" stroke="#41638c" /><path d="M4 3L12 8 20 3M5 20L12 8" stroke="#556" fill="none" /><Dots pts={[[3.500, 3], [21, 3], [12.500, 8.500], [4, 20.500]]} fill="#fce94f" stroke="#a88c10" r={2} /><path d="M13 16L17 22 23 11 17 17.500Z" fill="#fce94f" stroke="#7c6810" /></>,

  // edit-feature dialog
  swap: <g stroke="#5c1010" strokeWidth=".8"><path d="M1 9C4 3 9 2 13 4V1L20 6.500 12 11V8C9 6.500 5 7 1 9Z" fill="#981c1c" /><path d="M23 14C20 20 15 21.500 11 19.500V23L4 17 12 12.500V16C15 17 19 17 23 14Z" fill="#c84848" /></g>,
  rowAdd: <><TableGlyph /><rect x="1" y="6.500" width="22" height="5" fill="#ecd86a" stroke="#a89030" /><Star x={13.500} y={12.500} /></>,
  rowDel: <><TableGlyph /><rect x="1" y="6.500" width="22" height="5" fill="#f0483a" stroke="#c82818" /><Remove /></>,
  crs: <><circle cx="12" cy="13" r="9" fill="#9ccef0" stroke="#999" /><path d="M5 14Q6 19 10 21.500M12 15V22M16 14Q16 18 13 22M4 17.500H14" stroke="#fff" fill="none" /><path d="M.5 12L7.500 2H16.500L23.500 12Q12 15.500 .5 12Z" fill="#b4b4b4" stroke="#808080" /><path d="M4.500 6.500Q12 8.500 19.500 6.500M2.500 9.500Q12 12 21.500 9.500M10 2L8 13.500M14 2L16 13.500" stroke="#858585" fill="none" strokeWidth=".8" /><Badge fill="#c4a000" x={13} y={12.500}><PencilMark /></Badge></>,
};

const smallIcons: Record<string, React.ReactNode> = {
  brush: <><path d="M1 8L8 6 11 11 6 15 2 13Z" fill="#f8b43c" stroke="#c8783c" strokeWidth=".6" /><path d="M1 8L5 7 6 11 3 13Z" fill="#e84a4a" /><path d="M4 13L8 11 10 12 6 15.500Z" fill="#4a78d0" /><path d="M8 8L14 2" stroke="#b8904a" strokeWidth="2.500" /></>,
  group: <><path d="M4 5H1.500V14.500H10" fill="none" stroke="#777" strokeWidth="1.300" /><rect x="4.500" y="3.500" width="9" height="8.500" fill="#f0f0f0" stroke="#777" strokeWidth="1.300" /><path d="M7.500 9V2.500Q7.500 .5 8.800 .5T10 2.500V9" fill="none" stroke="#5a7ba0" strokeWidth="1.300" /><rect x="10" y="10" width="5" height="5" rx="1" fill="#4f9a5a" /><path d="M12.500 11V14M11 12.500H14" stroke="#fff" /></>,
  eye: <><path d="M0 8Q7 1 15 7 8 13 0 8Z" fill="#dde6f0" stroke="#8c98a8" /><circle cx="8" cy="7.500" r="3" fill="#4f81b8" /><circle cx="8" cy="7" r="1.200" fill="#123" /><path d="M9.500 11H17L13.300 14.500Z" fill="#555" /></>,
  filter: <><path d="M1 1H15V3.500L10 9V15L6.500 13V9L1 3.500Z" fill="#5b8cc0" stroke="#3d6da5" strokeWidth=".6" /><rect x="1" y="0.500" width="14" height="2.500" fill="#f4dc3c" stroke="#b8a020" strokeWidth=".5" /></>,
  eps: <><path d="M8.500 2.500C5 .3 1.500 2 2 4 2.300 5.500 4 5.700 5.500 5.700 3 5.700 1 6.600 1.200 8.500 1.500 11 6 11.500 8.800 9" fill="none" stroke="#6a3a7a" strokeWidth="1.700" /><path d="M7.500 7.500H15.500L13.500 11V15H9.500V11Z" fill="#bbb" stroke="#999" strokeWidth=".6" /></>,
  expand: <><path d="M2 1V14M2 4H5M2 8H5M2 13H5" stroke="#888" fill="none" /><rect x="4" y="6" width="3.500" height="3.500" fill="#f8b03c" stroke="#c07c14" strokeWidth=".6" /><rect x="4" y="11" width="3.500" height="3.500" fill="#f8b03c" stroke="#c07c14" strokeWidth=".6" /><path d="M9 1.500H13V9H15.500L11 14 6.500 9H9Z" fill="#4f81b8" stroke="#2d5580" strokeWidth=".7" /></>,
  collapse: <><path d="M2 1V14M2 4H5M2 8H5M2 13H5" stroke="#888" fill="none" /><rect x="4" y="6" width="3.500" height="3.500" fill="#f8b03c" stroke="#c07c14" strokeWidth=".6" /><rect x="4" y="11" width="3.500" height="3.500" fill="#f8b03c" stroke="#c07c14" strokeWidth=".6" /><path d="M9 14H13V6.500H15.500L11 1 6.500 6.500H9Z" fill="#4f81b8" stroke="#2d5580" strokeWidth=".7" /></>,
  removeLayer: <><rect x="1.500" y="1.500" width="11" height="11" fill="#f4f4f4" stroke="#777" strokeWidth="1.200" /><rect x="9.500" y="9.500" width="6" height="5.500" rx="1" fill="#e04848" /><path d="M10.800 12.200H14.300" stroke="#fff" strokeWidth="1.200" /></>,
};

/* ------------------------------------------------------------------ */
/* Toolbars                                                            */
/* ------------------------------------------------------------------ */

const Screen = styled.div`
  width: 1920px; height: 1080px; display: flex; flex-direction: column;
  overflow: hidden; position: relative; background: #f0f0f0; font-family: ${ui};
`;
const TitleBar = styled.header`
  height: 27px; flex: none; display: flex; align-items: flex-start; position: relative;
  border-bottom: 1px solid #6b7bab; box-shadow: inset 0 -1px 0 #cfdcf6;
  background:
    radial-gradient(ellipse 95px 20px at 60px 12px, rgba(255,255,255,.75), rgba(255,255,255,0)),
    linear-gradient(90deg, #a9c0ec 0, #b3c8f4 250px, #a6bae6 400px, #93a9d6 460px, #b2c6f2 490px, #b2c6f2 565px, #9db1dc 590px, #a3b7e2 680px, #b2c7f3 820px, #b1c6f2 1100px, #9fb4df 1130px, #b2c7f3 1160px, #b3c8f2 1205px, #9db1da 1232px, #b2c6f2 1260px, #b2c6f2 1370px, #a2b8e6 1410px, #a7bfec 1500px, #a9c1ee 1560px, #9db5e2 1640px, #aec5f2 1690px, #abc3f0 1920px);
`;
const TitleLogo = styled.div`padding: 3px 0 0 0; width: 25px; height: 24px;`;
const TitleText = styled.div`font-size: 15px; line-height: 26px; letter-spacing: -.35px; color: #000; width: 70px; white-space: nowrap;`;
const Ghost = styled.div<{ $w: number; $ml: number; $o?: number }>`
  width: ${p => p.$w}px; margin: 9px 0 0 ${p => p.$ml}px; height: 11px; border-radius: 6px;
  background: linear-gradient(90deg, #5d7099, #7284ad 30%, #5a6d96 60%, #66789f);
  filter: blur(3.5px); opacity: ${p => p.$o ?? .4};
`;
const WinButtons = styled.div`
  margin-left: auto; margin-right: 3px; height: 23px; width: 128px; display: flex;
  border: 1px solid #7184ad; border-top: 0; border-radius: 0 0 5px 5px; box-shadow: inset 0 0 0 1px rgba(255,255,255,.45);
  background: linear-gradient(#c0d1f4, #abc0ea 50%, #b8cbf2);
`;
const WinButton = styled.div<{ $w: number }>`
  width: ${p => p.$w}px; display: flex; justify-content: center; align-items: center; padding-left: 1px;
  & + & { border-left: 1px solid #8294bd; }
`;

const MenuBar = styled.nav`height: 25px; flex: none; border-bottom: 1px solid #d2d2d2; background: #f0f0f0; display: flex;`;
const MenuItem = styled.div<{ $w: number }>`
  width: ${p => p.$w}px; font-size: 15px; line-height: 25px; letter-spacing: -.42px; color: #9c9c9c; white-space: nowrap;
  &:first-child { margin-left: 11px; }
  u { text-underline-offset: 2px; text-decoration-thickness: 1px; }
`;

const Toolbar = styled.div<{ $h: number }>`
  height: ${p => p.$h}px; flex: none; display: flex; align-items: center;
  border-bottom: 1px solid #b6b6b6; background: linear-gradient(#fbfbfb, #eeeeee);
`;
const Handle = styled.div<{ $w: number }>`
  width: ${p => p.$w}px; height: 18px; flex: none; padding-right: 4px; display: flex; justify-content: flex-end;
  &::after {
    content: ''; width: 5px; height: 17px;
    background-image: radial-gradient(circle at 1px 1px, #aaa 0.7px, transparent 0.9px);
    background-size: 3px 3px;
  }
`;
const Tool = styled.div<{ $disabled?: boolean }>`
  width: 33px; height: 32px; flex: none; display: flex; align-items: center; justify-content: center;
  ${p => p.$disabled && css`opacity: .32; filter: grayscale(.75);`}
`;
const Pressed = styled(Tool)`
  width: 32px; margin-right: 1px; border: 1px solid #a6a6a6; border-radius: 2px; background: #dadada;
`;
const DropArrow = styled.div`
  width: 15px; flex: none; display: flex; padding-left: 2px;
  &::after { content: ''; border: 4.5px solid transparent; border-top: 5px solid #555; border-bottom: 0; }
`;
const Overflow = styled.div`width: 34px; text-align: center; font: bold 17px/20px ${tahoma}; padding-left: 8px; color: #000;`;
const Glyph = styled.svg`display: block; overflow: visible;`;

const Icon = ({ n }: { n: string }) => <Glyph width="24" height="24" viewBox="0 0 24 24">{icons[n]}</Glyph>;

/* Suffixes: ">" drop-down arrow, "~" disabled, "!" pressed; a number is a grip that wide. */
const renderTools = (items: (string | number)[]) => items.map((it, i) => {
  if (typeof it === 'number') return <Handle key={i} $w={it} />;
  if (it === 'more') return <Overflow key={i}>»</Overflow>;
  const flag = it.slice(-1);
  const name = /[>~!]$/.test(it) ? it.slice(0, -1) : it;
  if (flag === '!') return <Pressed key={i}><Icon n={name} /></Pressed>;
  return (
    <React.Fragment key={i}>
      <Tool $disabled={flag === '~'}><Icon n={name} /></Tool>
      {flag === '>' && <DropArrow />}
    </React.Fragment>
  );
});

const bar1 = [15, 'file', 'folder', 'save', 'saveAs', 'newLayout', 'layoutMgr', 'style', 18, 'hand!', 'panSel', 'zoomIn', 'zoomOut', 'zoomOne~', 'zoomFull', 'zoomSel', 'zoomLayer', 'zoomLast', 'zoomNext~', 'newMap', 'newBook', 'books', 'refresh', 30.500, 'info', 'action>', 'select>', 'selForm>', 'deselect', 'table', 'abacus', 'gear', 'sigma', 'measure>', 'tip', 'textNote>'];
const bar2 = [15, 'dataSource', 'geopackage', 'newShape', 'feather', 'chipNew', 18, 'pencils', 'pencil!', 'saveEdit', 'addLine', 'vertex>', 'multiEdit~', 'trash~', 'cut~', 'copy~', 'pasteGray~', 'undo', 'redo~', 'vertexNew', 'vertexEdit', 37, 'setSquare~', 'moveFeat>', 'rotate', 'simplify', 'addRing~', 'addPart', 'fillRing~', 'delRing~', 'delPart', 'reshape', 'offset', 'reverse', 'splitFeat', 'splitPart', 'merge~', 'more', 12, 'label', 'diagram', 'pinLabels', 'pinGray~', 'showGray~', 'moveGray~', 'rotGray~', 'editGray~', 18, 'web1', 'web2', 'web3', 18, 'python', 'hammer', 'reload>', 'bug', 'inspect'];
const bar3 = [15, 'curve>', 'circleAdd>', 'ellipseAdd>', 'rectAdd>', 'polyAdd>', 18, 'db', 18, 'ring>', 'xy', 'pts', 'cross>', 'breakLine', 'ruler', 'n123', 'blobs>', 'azd', 'axis', 18, 'help', 18, 'checkGeom'];

const menu: [string, string, string, number][] = [
  ['Pro', 'j', 'ect', 61], ['', 'E', 'dit', 41], ['', 'V', 'iew', 47], ['', 'L', 'ayer', 50], ['', 'S', 'ettings', 68],
  ['', 'P', 'lugins', 62], ['Vect', 'o', 'r', 58], ['', 'R', 'aster', 56], ['', 'D', 'atabase', 78], ['', 'W', 'eb', 46], ['Pro', 'c', 'essing', 85], ['', 'H', 'elp', 40],
];

/* ------------------------------------------------------------------ */
/* Layers panel                                                        */
/* ------------------------------------------------------------------ */

const Main = styled.main`height: 832px; flex: none; display: flex;`;
const LayersPanel = styled.section`width: 471px; display: flex; flex-direction: column;`;
const PanelTitle = styled.div`
  height: 22px; padding: 0 1px 0 4px; display: flex; align-items: center; gap: 2px;
  font-size: 15px; letter-spacing: -.5px;
`;
const PanelName = styled.span`flex: 1; line-height: 22px;`;
const PanelTools = styled.div`height: 29px; padding: 0 0 3px 3px; display: flex; align-items: center;`;
const PanelTool = styled.div`width: 25px; display: flex; justify-content: center;`;
const PanelArrow = styled(DropArrow)`padding-left: 2px;`;
const Tree = styled.div`flex: 1; border: 1px solid #b8b8b8; background: #fff;`;
const Row = styled.div<{ $child?: boolean; $active?: boolean }>`
  height: 22px; display: flex; align-items: center; padding: 0 3px 0 ${p => (p.$child ? 53 : 7)}px;
  background: ${p => (p.$active ? '#f0f0f0' : 'transparent')};
`;
const Expander = styled.span<{ $open?: boolean }>`
  width: 21px; display: flex; padding-left: .5px;
  &::after { content: ''; border: 5px solid transparent; border-top: 5.5px solid ${p => (p.$open ? '#6a6a6a' : 'transparent')}; border-bottom: 0; }
`;
const CheckBox = styled.span`
  width: 17px; height: 17px; flex: none; border: 1px solid #b4b4b4; background: #fff; display: flex; align-items: center; justify-content: center;
`;
const Check = () => (
  <CheckBox><svg width="13" height="13" viewBox="0 0 13 13"><path d="M2.200 6.800L5 10.800 10.500 1.800" fill="none" stroke="#000" strokeWidth="2.200" /></svg></CheckBox>
);
const GroupIcon = styled.svg`margin-left: 7px; margin-right: 6px; margin-top: -3px;`;
const GroupName = styled.span`font-size: 15px; letter-spacing: -.35px; line-height: 22px;`;
const SymbolBox = styled.span`width: 32px; display: flex; padding-left: 6px; flex: none;`;
const PointSymbol = styled.i<{ $c: string }>`
  width: 10.500px; height: 10.500px; margin-left: 4.5px; border-radius: 50%; border: 1px solid #444; background: ${p => p.$c};
`;
const LineSymbol = styled.i<{ $c: string }>`width: 19px; height: 1px; background: ${p => p.$c};`;
const PolySymbol = styled.i<{ $c: string }>`width: 19px; height: 19px; border: 1px solid ${p => p.$c};`;
const LayerName = styled.span<{ $dx?: number }>`
  font-weight: 700; font-size: 15px; letter-spacing: -.34px; line-height: 22px; flex: 1; white-space: nowrap;
  margin-left: ${p => p.$dx ?? 0}px;
`;
const LayerNameText = styled.span<{ $u?: boolean }>`
  text-decoration: ${p => (p.$u ? 'underline' : 'none')}; text-underline-offset: 2px; text-decoration-thickness: 1px;
`;
const Chip = ({ c = '#858585' }: { c?: string }) => (
  <svg width="16" height="14" viewBox="0 0 16 14">
    <path d="M3.500 0V3M6.500 0V3M9.500 0V3M12.500 0V3M3.500 11V14M6.500 11V14M9.500 11V14M12.500 11V14" stroke={c} strokeWidth="1.500" />
    <path d="M.8 2.800H15.200V5.500H14.200V8.500H15.200V11.200H.8V8.500H1.800V5.500H.8Z" fill="#fff" stroke={c} strokeWidth="1.600" />
  </svg>
);

type Layer = [name: string, color: string];
const groups: { name: string; kind: 'point' | 'line' | 'poly'; open: boolean; layers: Layer[] }[] = [
  { name: 'Point', kind: 'point', open: true, layers: [['Point', '#e0528a'], ['PointZ', '#b8cc4c'], ['PointM', '#e0b030'], ['PointZM', '#9478b8'], ['Multipoint', '#e87048'], ['MultiPointZ', '#b84448'], ['MultiPointM', '#b8cc4c'], ['MultipointZM', '#fc9c1c']] },
  { name: 'Line', kind: 'line', open: true, layers: [['Line', '#e8708c'], ['LineZ', '#8c4ca0'], ['LineM', '#d0b040'], ['LineZM', '#f0a0b0'], ['Multiline', ''], ['MultilineZ', '#dcae44'], ['MultiLineM', '#dc6a84'], ['MultilineZM', '#a87460']] },
  { name: 'Polygone', kind: 'poly', open: true, layers: [['Polygon', '#e85458'], ['PolygonZ', '#5cb45c'], ['PolygonM', '#fca84c'], ['PolygonZM', '#5cb45c'], ['MultiPolygon', '#fca84c'], ['MultiPolygonZ', '#fcb8bc'], ['MultiPolygonM', '#4c94c4'], ['MultiPolygonZM', '#e85458']] },
  { name: 'Import', kind: 'poly', open: false, layers: [] },
];

const Layers = () => (
  <LayersPanel>
    <PanelTitle>
      <PanelName>Layers</PanelName>
      {[0, 1].map(i => (
        <svg key={i} width="12" height="12" viewBox="0 0 12 12">
          <rect x=".7" y=".7" width="10.600" height="10.600" rx="2" fill="#f6f6f6" stroke="#666" />
          {i ? <path d="M3.300 3.300L8.700 8.700M8.700 3.300L3.300 8.700" stroke="#555" strokeWidth="2.200" />
            : <path d="M3 5.500H6.500V9H3ZM5.500 5V3H9V6.500H7" fill="none" stroke="#666" />}
        </svg>
      ))}
    </PanelTitle>
    <PanelTools>
      {['brush', 'group', 'eye', 'filter', 'eps'].map(n => <PanelTool key={n}><Glyph width="16" height="16" viewBox="0 0 16 16">{smallIcons[n]}</Glyph></PanelTool>)}
      <PanelArrow />
      {['expand', 'collapse', 'removeLayer'].map(n => <PanelTool key={n}><Glyph width="16" height="16" viewBox="0 0 16 16">{smallIcons[n]}</Glyph></PanelTool>)}
    </PanelTools>
    <Tree>
      {groups.map(g => (
        <React.Fragment key={g.name}>
          <Row>
            <Expander $open={g.open} />
            <Check />
            <GroupIcon width="18" height="18" viewBox="0 0 18 18">
              <path d="M4 11H1.500V17H8V15" fill="none" stroke="#aaa" strokeWidth="1.500" />
              <path d="M7 5V2.500H16V12H14" fill="none" stroke="#999" strokeWidth="1.300" />
              <rect x="4" y="4.500" width="10" height="9.500" fill="#eee" stroke="#888" strokeWidth="1.300" />
              <path d="M8 12V3Q8 1 9.500 1T11 3V10.500Q11 12 9.500 12" fill="none" stroke="#5a7ba0" strokeWidth="1.300" />
            </GroupIcon>
            <GroupName>{g.name}</GroupName>
          </Row>
          {g.layers.map(([name, color]) => {
            const active = name === 'Multiline';
            return (
              <Row key={name} $child $active={active}>
                <Check />
                <SymbolBox>
                  {active ? (
                    <Glyph width="17" height="17" viewBox="0 0 17 17">
                      <path d="M0 8.500H16" stroke="#8cc0bc" strokeWidth="1.300" />
                      <g transform="scale(.72)"><Pencil c="#a0745c" d="#7c5040" x={0} /></g>
                    </Glyph>
                  ) : g.kind === 'point' ? <PointSymbol $c={color} /> : g.kind === 'line' ? <LineSymbol $c={color} /> : <PolySymbol $c={color} />}
                </SymbolBox>
                <LayerName $dx={active ? -4 : g.kind === 'point' ? 0 : -1}><LayerNameText $u={active}>{name}</LayerNameText></LayerName>
                <Chip c={active ? '#8c9cb4' : undefined} />
              </Row>
            );
          })}
        </React.Fragment>
      ))}
    </Tree>
  </LayersPanel>
);
const Splitter = styled.div`
  width: 7px; display: flex; align-items: center; justify-content: center;
  &::after { content: ''; width: 1px; height: 17px; background: repeating-linear-gradient(#aaa 0 1px, transparent 1px 3px); }
`;
const Canvas = styled.section`flex: 1; margin-top: 1px; border: 1px solid #b8b8b8; background: #fff;`;

const track = [[1068, 385], [1210, 370], [1402, 375.500], [1423, 389], [1422, 519.500], [1508, 577], [1605, 658.500], [1523, 747], [1413, 727.500], [1250, 744], [1113, 630], [1272, 434]];
const MapView = () => (
  <Canvas>
    <svg width="1440" height="829" viewBox="479 170 1440 829">
      <path d="M1250 744L1412.500 768 1523 747" fill="none" stroke="#7ca87c" strokeWidth="1.400" />
      <polyline points={track.map(p => p.join(',')).join(' ')} fill="none" stroke="#ff0000" strokeWidth="2" />
      {track.map(([x, y], i) => i === 8
        ? <rect key={i} x={x - 5.500} y={y - 5.500} width="11" height="11" fill="#800000" />
        : <path key={i} d={`M${x - 5} ${y}L${x} ${y - 5} ${x + 5} ${y} ${x} ${y + 5}Z`} fill="#000080" />)}
    </svg>
  </Canvas>
);

/* ------------------------------------------------------------------ */
/* Edit feature dialog                                                 */
/* ------------------------------------------------------------------ */

const Dialog = styled.section`
  position: absolute; left: 602px; top: 267px; width: 404px; height: 511px;
  border: 1px solid #1c2438; border-radius: 7px 7px 5px 5px; padding: 0 7px 7px;
  box-shadow: inset 0 0 0 1px #c8d6f2; display: flex; flex-direction: column;
  background:
    radial-gradient(ellipse 90px 18px at 70px 18px, rgba(255,255,255,.7), rgba(255,255,255,0)),
    linear-gradient(100deg, #b0c4ec 0, #aabfe8 34%, #8ea6d6 40%, #93a9da 60%, #a8bce6 72%, #b4c6ec 100%) 0 0 / 100% 36px no-repeat,
    linear-gradient(#b8c6e6 0, #c2ceea 110px, #d8e0f2 150px, #8ea6da 153px, #96ace0 300px, #8fa6d8 420px, #96ade0 100%);
`;
const DialogTitle = styled.div`height: 35px; flex: none; display: flex; align-items: flex-start;`;
const DialogLogo = styled.div`padding: 8px 0 0 1px; width: 26px;`;
const DialogName = styled.div`flex: 1; font-size: 15px; line-height: 34px; letter-spacing: -.5px;`;
const CloseButton = styled.div`
  width: 59px; height: 25px; border: 1px solid #5c1c20; border-top: 0; border-radius: 0 0 5px 5px;
  background: linear-gradient(#dca49c, #cf7c70 45%, #b8341f 50%, #c8503a 80%, #e08a70);
  box-shadow: inset 0 0 0 1px rgba(255,255,255,.45); display: flex; align-items: center; justify-content: center; padding: 0 0 1px 2px;
`;
const CloseGlyph = ({ c = '#4a5468', s = 15 }: any) => (
  <svg width={s} height={s} viewBox="0 0 16 16"><path d="M1 1.500H5.500L8 4.500 10.500 1.500H15L10.500 8 15 14.500H10.500L8 11.500 5.500 14.500H1L5.500 8Z" fill="#fff" stroke={c} strokeWidth="1.200" /></svg>
);
const Client = styled.div`
  flex: 1; border: 1px solid #48547c; background: #f0f0f0; padding: 8px 5px 5px; display: flex; flex-direction: column; font: 13px ${tahoma};
`;
const DialogTools = styled.div`display: flex; height: 43px;`;
const DialogTool = styled.div<{ $ml?: number; $disabled?: boolean }>`
  width: 32px; height: 32px; margin-left: ${p => p.$ml ?? 4}px; border: 1px solid ${p => (p.$disabled ? '#d0d0d0' : '#a8a8a8')};
  border-radius: 2px; background: linear-gradient(#fdfdfd, #efefef); display: flex; align-items: center; justify-content: center;
  > svg { opacity: ${p => (p.$disabled ? 0.3 : 1)}; filter: ${p => (p.$disabled ? 'grayscale(1)' : 'none')}; }
`;
const Tables = styled.div`display: flex; gap: 3px; height: 254px;`;
const PartList = styled.div`width: 62px; border: 1px solid #b4b4b4; background: #fff; font-family: "Liberation Sans", Arial, sans-serif;`;
const PartHead = styled.div`height: 26px; background: #f0f0f0; border-bottom: 1px solid #b4b4b4; font-size: 15px; line-height: 26px; letter-spacing: 0; padding-left: .5px; white-space: nowrap;`;
const PartItem = styled.div`padding: 0 4px; font: 16px/20px ${ui};`;
const GridFrame = styled.div`flex: 1; border: 1px solid #b4b4b4; background: #fff; display: flex; overflow: hidden;`;
const Grid = styled.div`width: 292px; flex: none; display: grid; grid-template-columns: 22px 135px 135px; grid-template-rows: 24px repeat(7, 37px); overflow: hidden;`;
const Head = styled.div<{ $b?: boolean; $rowHead?: boolean; $corner?: boolean }>`
  background: linear-gradient(#fcfcfc, #ececec); border-bottom: 1px solid ${p => (p.$rowHead ? '#b8b8b8' : '#a8a8a8')};
  border-right: ${p => (p.$corner ? '0' : '1px solid #c0c0c0')};
  display: flex; align-items: center; justify-content: ${p => (p.$rowHead ? 'flex-start' : 'center')};
  padding-left: ${p => (p.$rowHead ? 2 : 0)}px; font-weight: ${p => (p.$b ? 700 : 400)}; padding-top: 2px;
`;
const Cell = styled.div<{ $sel?: boolean }>`
  border-right: 1px solid #c8c8c8; border-bottom: 1px solid #c8c8c8; display: flex; align-items: center; padding: 2px 0 0 3px;
  letter-spacing: -.38px; white-space: nowrap; color: #000;
  ${p => p.$sel && css`background: #3c9cff; color: #cfe6ff; font-size: 15px; padding-top: 0; letter-spacing: 0; border-color: #3088e0; font-family: ${ui};`}
`;
const ScrollBar = styled.div`flex: 1; display: flex; flex-direction: column; background: #e6e6e6;`;
const ScrollEnd = styled.div<{ $up?: boolean }>`
  height: 16px; background: #fcfcfc; display: flex; align-items: center; justify-content: center;
  &::after { content: ''; border: 5px solid transparent; ${p => (p.$up ? 'border-bottom: 5px solid #555; border-top: 0;' : 'border-top: 5px solid #555; border-bottom: 0;')} }
`;
const ScrollThumb = styled.div`height: 102px; background: #fafafa; border: solid #c0c0c0; border-width: 1px 0; margin-bottom: auto;`;
const GroupTitle = styled.div`font-weight: 700; font-size: 13px; letter-spacing: -.15px; line-height: 20px; margin: 8px 0 0 2px;`;
const GroupBox = styled.div`height: 95px; margin-left: 1px; border: 1px solid #d4d4d4; border-radius: 2px; background: #ececec; padding: 3px 7px; display: flex; flex-direction: column;`;
const RadioRow = styled.label`height: 29px; display: flex; align-items: center; gap: 7px; letter-spacing: -.13px;`;
const Radio = styled.span<{ $on?: boolean }>`
  width: 16px; height: 16px; border: 1px solid #a4a4a4; border-radius: 50%;
  background: ${p => (p.$on ? 'radial-gradient(circle at 50% 50%, #404040 3.6px, #fff 4.3px)' : '#fff')};
`;
const NotSelected = styled.span`margin-left: 124px; color: #808080; letter-spacing: -.25px;`;
const Buttons = styled.div`display: flex; justify-content: flex-end; gap: 7px; margin-top: 7px;`;
const Button = styled.div<{ $default?: boolean }>`
  width: 80px; height: 25px; border: 1px solid ${p => (p.$default ? '#4c98e0' : '#b0b0b0')}; border-radius: 2px;
  background: ${p => (p.$default ? 'linear-gradient(#fdfdfd, #e4ebf4)' : 'linear-gradient(#fefefe, #f0f0f0)')};
  display: flex; align-items: center; justify-content: center; letter-spacing: -.3px; padding-top: 2px;
`;

const coords = [['-39.85166670833...', '207.48083354394...'], ['-174.4716668456...', '41.534166708011...'], ['-58.47833339400...', '-54.98583339043...'], ['78.681666745902...', '-40'], ['172.66166684176...', '-57.52583339302...'], ['242.08833357924...', '17.827500017163...'], ['', '']];
const dialogTools: [string, number?, boolean?][] = [['addPart', 5], ['delPart'], ['addRing', 4, true], ['copy', 18], ['paste'], ['swap', 3], ['rowAdd'], ['rowDel', 3], ['crs', 18]];

const EditFeature = () => (
  <Dialog>
    <DialogTitle>
      <DialogLogo><QLogo size={20} /></DialogLogo>
      <DialogName>Edit feature</DialogName>
      <CloseButton><CloseGlyph c="#5c3434" /></CloseButton>
    </DialogTitle>
    <Client>
      <DialogTools>
        {dialogTools.map(([n, ml, dis], i) => <DialogTool key={i} $ml={ml} $disabled={dis}><Icon n={n} /></DialogTool>)}
      </DialogTools>
      <Tables>
        <PartList><PartHead>Part №</PartHead><PartItem>1</PartItem></PartList>
        <GridFrame>
          <Grid>
            <Head $corner /><Head>X</Head><Head $b>Y</Head>
            {coords.map(([x, y], i) => (
              <React.Fragment key={i}>
                <Head $rowHead $b={i === 3}>{i < 6 ? i + 1 : ''}</Head>
                <Cell>{x}</Cell>
                <Cell $sel={i === 3}>{y}</Cell>
              </React.Fragment>
            ))}
          </Grid>
          <ScrollBar><ScrollEnd $up /><ScrollThumb /><ScrollEnd /></ScrollBar>
        </GridFrame>
      </Tables>
      <GroupTitle>Coordinates are given</GroupTitle>
      <GroupBox>
        <RadioRow><Radio $on />in the CRS of the Layer</RadioRow>
        <RadioRow><Radio />in the CRS of the Project</RadioRow>
        <RadioRow><Radio />other<NotSelected>not selected</NotSelected></RadioRow>
      </GroupBox>
      <Buttons><Button $default>OK</Button><Button>Cancel</Button></Buttons>
    </Client>
  </Dialog>
);

/* ------------------------------------------------------------------ */
/* Status bar                                                          */
/* ------------------------------------------------------------------ */

const StatusBar = styled.footer`height: 32px; flex: none; display: flex; align-items: center; background: #f0f0f0; font: 13px ${tahoma}; letter-spacing: -.35px; padding-left: 4px;`;
const Locate = styled.div`
  width: 234px; height: 24px; border: 1px solid #b0b0b0; border-radius: 2px; background: #fff; color: #7c7c7c; letter-spacing: -.3px;
  display: flex; align-items: center; gap: 7px; padding-left: 8px; margin-right: 788px; margin-top: 1px;
`;
const Label = styled.span<{ $w: number }>`width: ${p => p.$w}px; flex: none; white-space: nowrap; padding-top: 1px;`;
const Field = styled.span<{ $w: number; $c?: boolean }>`
  width: ${p => p.$w}px; height: 23px; flex: none; border: 1px solid #b0b0b0; border-radius: 2px; background: #fff;
  display: flex; align-items: center; justify-content: ${p => (p.$c ? 'center' : 'space-between')}; padding-left: ${p => (p.$c ? 0 : 4)}px; letter-spacing: -.15px;
`;
const Slot = styled.span<{ $w: number }>`width: ${p => p.$w}px; flex: none; display: flex; justify-content: center;`;
const ComboEnd = styled.span`
  width: 25px; height: 21px; background: linear-gradient(#fafafa, #f0f0f0); display: flex; align-items: center; padding-left: 5px;
  &::after { content: ''; border: 5px solid transparent; border-top: 5.5px solid #555; border-bottom: 0; }
`;
const SpinEnd = styled.span`
  width: 17px; height: 21px; border-left: 1px solid #bbb; background: #f8f8f8; display: flex; flex-direction: column; align-items: center; justify-content: space-evenly;
  &::before { content: ''; border: 4.5px solid transparent; border-bottom: 5px solid #555; border-top: 0; }
  &::after { content: ''; border: 4.5px solid transparent; border-top: 5px solid #555; border-bottom: 0; }
`;

const Status = () => (
  <StatusBar>
    <Locate>
      <svg width="13" height="13" viewBox="0 0 13 13"><circle cx="5.500" cy="5" r="4" fill="none" stroke="#999" strokeWidth="1.300" /><path d="M8.300 8.300L12 12" stroke="#999" strokeWidth="1.600" /></svg>
      Type to locate (Ctrl+K)
    </Locate>
    <Label $w={65}>Coordinate</Label>
    <Field $w={88} $c>69.4,-69.4</Field>
    <Slot $w={26}>
      <svg width="20" height="20" viewBox="0 0 20 20">
        <path d="M2 5Q2 2 5 2 8 0 11 2L15 9 8 14 3 9Z" fill="#111" /><path d="M5 4L8 9M8 3L11 8" stroke="#fff" strokeWidth="1.300" />
        <circle cx="12" cy="14" r="5" fill="#fff" stroke="#111" strokeWidth="1.400" /><circle cx="12" cy="14" r="1.500" fill="#111" />
        <path d="M4 12L8 14M13 5L18 1" stroke="#111" strokeWidth="1.500" strokeDasharray="2 1.500" /><path d="M16 17L19 14" stroke="#b8a4a0" strokeWidth="2" />
      </svg>
    </Slot>
    <Slot $w={11} />
    <Label $w={34}>Scale</Label>
    <Field $w={93}>1:4000<ComboEnd /></Field>
    <Slot $w={37}>
      <svg width="16" height="18" viewBox="0 0 16 18"><path d="M4 9V5Q4 1 8 1T12 5V9" fill="none" stroke="#999" strokeWidth="1.800" /><rect x=".5" y="8" width="15" height="10" rx="1" fill="#5c5c5c" /></svg>
    </Slot>
    <Label $w={56}>Magnifier</Label>
    <Field $w={93}>100%<SpinEnd /></Field>
    <Slot $w={9} />
    <Label $w={56}>Rotation</Label>
    <Field $w={89}>0.0 °<SpinEnd /></Field>
    <Slot $w={6} />
    <Check />
    <Slot $w={6} />
    <Label $w={58}>Render</Label>
    <Slot $w={20}>
      <svg width="20" height="18" viewBox="0 0 20 18"><circle cx="10" cy="10" r="7" fill="#ddd" stroke="#888" /><path d="M.5 9L5 1.500H15L19.500 9Q10 12 .5 9Z" fill="#bbb" stroke="#777" /><path d="M2.500 5H17.500M7 1.500L6 16M13 1.500L14 16M10 1V17M4 13H16" stroke="#777" fill="none" /></svg>
    </Slot>
    <Slot $w={4} />
    <Label $w={99}>USER:100026</Label>
    <svg width="20" height="19" viewBox="0 0 20 19"><path d="M10 1C15 1 19.500 3.500 19.500 8.500 19.500 11 18 13 16.500 14L18 18.500 12.500 15.500C5 16.500 .5 13.500 .5 8.500 .5 3.500 5 1 10 1Z" fill="#5c5c5c" /><circle cx="5.500" cy="8" r="1.400" fill="#fff" /><circle cx="10" cy="8" r="1.400" fill="#fff" /><circle cx="14.500" cy="8" r="1.400" fill="#fff" /></svg>
  </StatusBar>
);

/* ------------------------------------------------------------------ */
/* Taskbar                                                             */
/* ------------------------------------------------------------------ */

const TaskBarBox = styled.div`
  height: 48px; flex: none; display: flex; align-items: center; border-top: 1px solid #1c2c44; box-shadow: inset 0 1px 0 #8ca4bc;
  color: #fff; font-family: ${ui}; overflow: hidden;
  background:
    linear-gradient(rgba(255,255,255,.1), rgba(255,255,255,0) 45%, rgba(0,16,50,.08) 88%, rgba(30,40,90,.5)),
    radial-gradient(ellipse 44px 26px at 1490px 22px, #304e82, rgba(48,78,130,0)),
    radial-gradient(ellipse 36px 24px at 1572px 18px, #5c909c, rgba(92,144,156,0)),
    radial-gradient(ellipse 36px 26px at 1605px 36px, #6c7c98, rgba(108,124,152,0)),
    radial-gradient(ellipse 60px 26px at 1640px 6px, #284878, rgba(40,72,120,0)),
    radial-gradient(ellipse 60px 24px at 1710px 34px, #3c6878, rgba(60,104,120,0)),
    radial-gradient(ellipse 50px 20px at 1055px 32px, #6c88bc, rgba(108,136,188,0)),
    radial-gradient(ellipse 80px 30px at 1130px 10px, #4c7c8c, rgba(76,124,140,0)),
    radial-gradient(ellipse 60px 22px at 1265px 14px, #7498b4, rgba(116,152,180,0)),
    radial-gradient(ellipse 60px 24px at 1320px 34px, #6a8a98, rgba(106,138,152,0)),
    radial-gradient(ellipse 60px 24px at 1400px 24px, #3c7078, rgba(60,112,120,0)),
    radial-gradient(ellipse 90px 26px at 780px 20px, #5c84a4, rgba(92,132,164,0)),
    radial-gradient(ellipse 70px 26px at 920px 30px, #6484ac, rgba(100,132,172,0)),
    linear-gradient(90deg, #34506e 0, #34527c 100px, #4a6a8c 250px, #4a6c92 640px, #557a98 900px, #527a96 1100px, #5a809c 1280px, #44708a 1420px, #3f6280 1560px, #385a7c 1680px, #40586e 1800px, #34506c 1920px);
`;
const Orb = styled.div`width: 72px; display: flex; justify-content: center; padding-right: 5px;`;
const Task = styled.div<{ $open?: boolean; $active?: boolean }>`
  width: 66px; height: 46px; margin-right: 4px; flex: none; display: flex; align-items: center; justify-content: center;
  ${p => p.$open && css`
    border: 1px solid #1c2c44; border-radius: 3px; box-shadow: inset 0 0 0 1px rgba(255,255,255,.6);
    background: ${p.$active ? 'linear-gradient(135deg, #dce4ea, #b4c4d0 50%, #a4b8c8)' : 'linear-gradient(135deg, rgba(255,255,255,.6), rgba(200,215,235,.35) 45%, rgba(190,205,225,.3))'};
  `}
`;
const Tray = styled.div`margin-left: auto; display: flex; align-items: center; height: 100%;`;
const Lang = styled.div`width: 33px; font-size: 14px; letter-spacing: -.3px; padding-bottom: 4px;`;
const Clock = styled.div`width: 90px; text-align: center; font-size: 14.500px; line-height: 22px; letter-spacing: -.5px; padding-top: 1px; margin-left: 6px;`;
const ShowDesktop = styled.div`width: 14px; height: 47px; margin: 0 1px 0 3px; border: 1px solid #a0b0c0; background: linear-gradient(160deg, #8c9cac, #34465c 50%, #2c4468);`;
const TrayIcon = styled.div<{ $w: number }>`width: ${p => p.$w}px; display: flex; justify-content: center;`;

const TaskBar = () => (
  <TaskBarBox>
    <Orb>
      <svg width="46" height="46" viewBox="0 0 46 46">
        <defs><radialGradient id="orb" cx=".5" cy=".95" r=".9"><stop offset="0" stopColor="#3ce0f8" /><stop offset=".4" stopColor="#1474b0" /><stop offset=".75" stopColor="#1c4a78" /><stop offset="1" stopColor="#a0b8cc" /></radialGradient></defs>
        <circle cx="23" cy="23" r="21" fill="url(#orb)" stroke="#a4bccc" strokeWidth="1.300" />
        <path d="M4 21A19 19 0 0 1 42 21Q23 28 4 21Z" fill="#fff" opacity=".3" />
        <path d="M13 12Q17 9 22 12L20 22Q16 19 11 22Z" fill="#e8602c" /><path d="M24 13Q30 16 36 13L34 23Q28 26 22 23Z" fill="#8cc83c" />
        <path d="M10.500 24Q15 21 19.500 24L17.500 34Q13 31 9 33Z" fill="#6cb8f0" /><path d="M21.500 25Q27 28 33 25L31 35Q25 38 19.500 35Z" fill="#fcd048" />
      </svg>
    </Orb>
    <Task>
      <svg width="40" height="40" viewBox="0 0 40 40">
        <path d="M20 6C11 6 5 13 5 21.500S11 36 20 36C27 36 32 32 34 26H26Q24 29.500 20 29.500 13.500 29 13 23.500H35C36 14 29 6 20 6ZM13.500 17.500Q15 12.500 20.500 12.500 26 13 26.500 17.500Z" fill="#6cd0f8" stroke="#2890d0" strokeWidth=".8" />
        <path d="M8 36C2 40-1 33 5 24 13 10 28 0 35 3 37 4 37 7 35.500 10 36 6 34 5 31 6 22 8 12 19 7 29 5 34 6 36 8 36Z" fill="#fcd030" stroke="#d89c10" strokeWidth=".7" />
      </svg>
    </Task>
    <Task $open>
      <svg width="42" height="40" viewBox="0 0 42 40">
        <path d="M3 3H10L12 5H18V3H26L28 5H38V12H3Z" fill="#f4e4a0" stroke="#b89c48" /><path d="M4 3H9L8 6H4Z" fill="#3cac3c" /><path d="M18 5H22V7H18Z" fill="#d84038" /><path d="M27 8H34V10H27Z" fill="#4c9cdc" />
        <path d="M1.500 8H16L18 11H40V35H1.500Z" fill="#f2d87c" stroke="#c8a848" /><path d="M2 9L30 11 8 35H2Z" fill="#faeaa8" opacity=".8" />
        <path d="M7 38V24H35V38H29V30H13V38Z" fill="#a4d8f0" stroke="#5ca4c8" />
      </svg>
    </Task>
    <Task>
      <svg width="42" height="40" viewBox="0 0 42 40">
        <path d="M9 3C18-2 33 2 38 13 43 26 36 38 24 39 28 35 29 31 28 28L12 22 5 18C3 12 7 9 9 3Z" fill="#1f6cc8" />
        <path d="M9 3C17 0 27 5 30 14 22 8 12 10 6 20 1 24 2 11 9 3Z" fill="#144a94" />
        <path d="M5 16L22 13 30 27 20 36C10 35 2 26 5 16Z" fill="#f6f6fa" stroke="#b8c0cc" strokeWidth=".7" /><path d="M5 16L18 25 22 13" fill="none" stroke="#98a8bc" />
        <path d="M36 10C40 20 38 32 26 38.500" fill="none" stroke="#3c94e8" strokeWidth="2" />
      </svg>
    </Task>
    <Task $open>
      <svg width="40" height="40" viewBox="0 0 40 40">
        <defs><linearGradient id="fox" x1=".8" y1="0" x2=".3" y2="1"><stop offset="0" stopColor="#ffe03c" /><stop offset=".45" stopColor="#ff8a1c" /><stop offset="1" stopColor="#f0285c" /></linearGradient></defs>
        <path d="M25 1C28 4 30 6 31 10 33 10 33 8 33 8 38 13 40 20 37 28 33 37 25 40 18 39 8 38 1 30 2 20 2 15 4 11 7 7L8 12C12 10 15 11 16 11 20 9 22 6 25 1Z" fill="url(#fox)" />
        <circle cx="20" cy="23" r="8" fill="#7440d8" /><path d="M8 12C13 10 17 13 19 16L14 19C10 20 15 22 12 24 14 32 26 34 29 24 32 32 22 38 14 33 6 28 5 18 8 12Z" fill="#ff9a24" />
      </svg>
    </Task>
    <Task $open>
      <svg width="40" height="42" viewBox="0 0 40 42">
        <rect x="1" y="1" width="38" height="35" fill="#0808d8" stroke="#20e8f8" strokeWidth="1.500" />
        <path d="M14.500 2V35M20.500 2V35M33.500 2V35" stroke="#20e8f8" strokeWidth="1.200" /><path d="M5 4.500H11M16 4.500H19M24 4.500H30M35 4.500H38" stroke="#f8f040" strokeWidth="1.500" />
        <path d="M3 8H13M3 11H13M3 14H13M16 8H19.500M16 11H19.500M22.500 8H32M22.500 11H32M16 14H19M35 8H38" stroke="#20e8f8" strokeWidth="1.400" strokeDasharray="9 1" />
        <path d="M2 31.500H38" stroke="#20e8f8" /><rect y="36" width="40" height="6" fill="#000" /><path d="M3 40H38" stroke="#0c8080" strokeWidth="3" strokeDasharray="5 2" />
      </svg>
    </Task>
    <Task $open>
      <svg width="40" height="40" viewBox="0 0 40 40"><path d="M29 1L39 5V35L29 39Z" fill="#2ca4f0" /><path d="M1 12L5 9 30 29V39Z" fill="#1c7cc4" /><path d="M1 28L5 31 30 11V1Z" fill="#0c68ac" /><path d="M29 11V29L18 20Z" fill="#b8c8d4" /></svg>
    </Task>
    <Task $open>
      <svg width="40" height="40" viewBox="0 0 40 40"><path d="M2 1H23L28 8V26L9 27 2 20Z" fill="#0c3c60" /><path d="M14 16H38V39H20L14 33Z" fill="#14c4e0" /><path d="M7 6H26L32 12V34H13L7 28Z" fill="#fff" /><path d="M12 11H24V16H17V19H24V15L34 23 24 31V27H12Z" fill="#14b4d8" /><path d="M17 20.500H25V16L33.500 23 25 30.500V26H17Z" fill="#fff" /></svg>
    </Task>
    <Task $open $active><QLogo size={38} /></Task>
    <Tray>
      <Lang>EN</Lang>
      <TrayIcon $w={26}><svg width="10" height="6" viewBox="0 0 10 6"><path d="M0 6L5 0 10 6Z" fill="#fff" /></svg></TrayIcon>
      <TrayIcon $w={37}><svg width="20" height="20" viewBox="0 0 20 20"><path d="M2 1V19" stroke="#fff" strokeWidth="2" /><path d="M4 2Q8 0 11 3V6Q15 8 18 6L16 12Q12 13 9 10 7 9 4 10Z" fill="#fff" stroke="#233" strokeWidth=".5" /></svg></TrayIcon>
      <TrayIcon $w={26}><svg width="20" height="20" viewBox="0 0 20 20"><rect x="6" y="5" width="13" height="9" fill="#4c6478" stroke="#fff" strokeWidth="1.500" /><path d="M12 14V18M8 18H17" stroke="#fff" strokeWidth="1.800" /><rect x="1.500" y="2" width="5" height="6" fill="#8094a4" stroke="#fff" strokeWidth="1.300" /><path d="M4 8V18H7" fill="none" stroke="#fff" strokeWidth="1.300" /></svg></TrayIcon>
      <TrayIcon $w={31}><svg width="20" height="20" viewBox="0 0 20 20"><path d="M1.500 6.500H5L10 1.500V18.500L5 13.500H1.500Z" fill="#fff" stroke="#345" strokeWidth=".6" /><path d="M12 7.500Q13.500 10 12 12.500M14.500 5.500Q17 10 14.500 14.500M17 3.500Q20.500 10 17 16.500" fill="none" stroke="#dce6f0" strokeWidth="1.200" /></svg></TrayIcon>
      <Clock>15:55<br />01.02.2020</Clock>
      <ShowDesktop />
    </Tray>
  </TaskBarBox>
);

export default function App() {
  return (
    <Screen>
      <Global />
      <TitleBar>
        <TitleLogo><QLogo size={21} /></TitleLogo>
        <TitleText>ND - QGIS</TitleText>
        <Ghost $w={22} $ml={3} $o={.3} />
        <Ghost $w={22} $ml={16} $o={.45} />
        <Ghost $w={50} $ml={5} $o={.5} />
        <Ghost $w={20} $ml={6} $o={.45} />
        <Ghost $w={72} $ml={564} $o={.28} />
        <Ghost $w={230} $ml={14} $o={.22} />
        <WinButtons>
          <WinButton $w={35}><svg width="18" height="14" viewBox="0 0 18 14"><rect x="1" y="8.500" width="16" height="4" rx="1" fill="#fff" stroke="#525c74" strokeWidth="1.200" /></svg></WinButton>
          <WinButton $w={33}><svg width="18" height="17" viewBox="0 0 18 17"><path d="M4.500 1H17V12.500H14" fill="#fff" stroke="#525c74" strokeWidth="1.200" /><rect x="1" y="3.500" width="13" height="12.500" fill="#fff" stroke="#525c74" strokeWidth="1.200" /><rect x="5" y="7.500" width="5" height="4.500" fill="#b4c6ee" stroke="#525c74" strokeWidth="1.200" /></svg></WinButton>
          <WinButton $w={60}><CloseGlyph /></WinButton>
        </WinButtons>
      </TitleBar>
      <MenuBar>
        {menu.map(([a, b, c, w]) => <MenuItem key={a + b + c} $w={w}>{a}<u>{b}</u>{c}</MenuItem>)}
      </MenuBar>
      <Toolbar $h={39}>{renderTools(bar1)}</Toolbar>
      <Toolbar $h={39}>{renderTools(bar2)}</Toolbar>
      <Toolbar $h={38}>{renderTools(bar3)}</Toolbar>
      <Main>
        <Layers />
        <Splitter />
        <MapView />
      </Main>
      <Status />
      <TaskBar />
      <EditFeature />
    </Screen>
  );
}
